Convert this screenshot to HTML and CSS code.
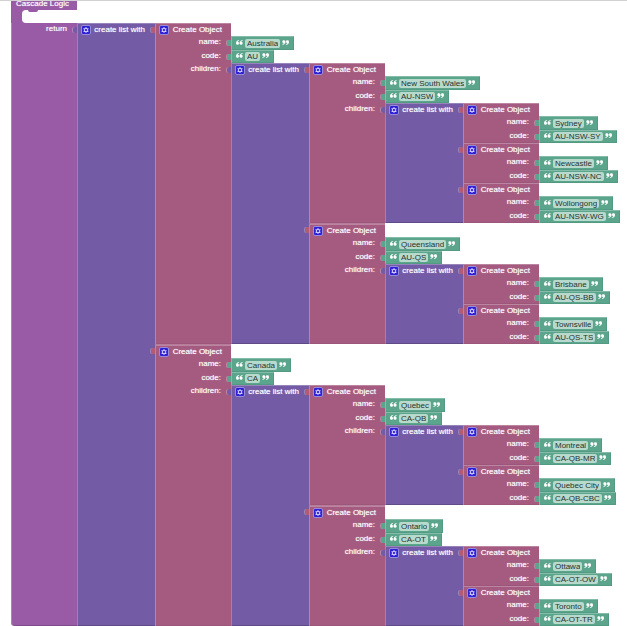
FILE: index.html
```html
<!DOCTYPE html>
<html lang="en">
<head>
<meta charset="utf-8">
<title>Cascade Logic</title>
<link rel="stylesheet" href="styles.css">
<script src="blocks.js" defer></script>
</head>
<body>
<svg class="symbols" aria-hidden="true">
  <symbol id="gear" viewBox="0 0 20 20">
    <rect x="1" y="1" width="18" height="18" rx="3" fill="#3020d4" stroke="#a79fe6" stroke-width="1.6"/>
    <path d="M10 4.5v11M5.2 7.2l9.6 5.6M14.8 7.2l-9.6 5.6" stroke="#d9d6ff" stroke-width="2.4"/>
    <circle cx="10" cy="10" r="3.2" fill="#3020d4" stroke="#d9d6ff" stroke-width="1.6"/>
  </symbol>
  <symbol id="open" viewBox="0 0 7 5">
    <path id="mark" d="M3 0C1 .5 0 1.6 0 3.3a1.5 1.5 0 1 0 1.6-1.5C1.7 1.2 2.2.8 3 .6z" fill="#fff" stroke="#fff" stroke-width=".2"/>
    <use href="#mark" x="3.6"/>
  </symbol>
  <symbol id="close" viewBox="0 0 7 5">
    <use href="#open" width="7" height="5" transform="rotate(180 3.5 2.5)"/>
  </symbol>
</svg>
<main class="workspace">
  <header class="root-head">Cascade Logic</header>
  <div class="slot-row"><div class="slot"></div></div>
  <section class="root-body">
    <div class="root-label">return</div>
    <div id="result"></div>
  </section>
</main>
</body>
</html>
```
FILE: styles.css
```css
:root {
  --root: #995ba5;
  --list: #745ba5;
  --object: #a55b80;
  --text: #5ba58c;
  --edge: rgba(255, 255, 255, 0.25);
}

* { box-sizing: border-box; }

body {
  margin: 0;
  background: #fff;
  color: #fff;
  font: 8px/12px "Liberation Sans", Arial, sans-serif;
}

.symbols { position: absolute; width: 0; height: 0; }

.workspace { padding-left: 11px; border-top: 1px solid #d4d0d6; }

.root-head {
  width: 66px;
  height: 9px;
  padding-left: 5px;
  line-height: 6px;
  background: var(--root);
  white-space: nowrap;
}

.root-head,
.root-label,
.head,
.key { text-shadow: 0 0 1px rgba(255, 255, 255, 0.7); }

.slot-row {
  width: 66px;
  height: 13px;
  padding-left: 11px;
  background: var(--root);
}

.slot {
  position: relative;
  height: 100%;
  border-radius: 4px 0 0 4px;
  background: #fff;
}

.slot::before {
  content: "";
  position: absolute;
  left: 6px;
  width: 10px;
  height: 2px;
  border-radius: 0 0 4px 4px;
  background: var(--root);
}

.root-body { display: flex; }

.root-label {
  width: 66px;
  padding-right: 10px;
  border-radius: 0 0 0 4px;
  background: var(--root);
  box-shadow: inset 1px 0 var(--edge), inset 0 -1px #7d4b88;
  text-align: right;
}

.list { position: relative; display: flex; }

.list-label {
  width: 78px;
  background: var(--list);
  box-shadow: inset 1px 1px var(--edge), inset 0 -1px #5f4b88;
}

.head {
  display: flex;
  align-items: center;
  justify-content: space-between;
  height: 13px;
  white-space: nowrap;
}

.list-label > .head { padding: 0 10px 0 4px; }

.object { position: relative; }

.object > .head {
  width: 76px;
  padding: 0 9px 0 4px;
  background: var(--object);
  box-shadow: inset 1px 1px var(--edge);
}

.object.parent + .object > .head {
  height: 14px;
  border-top: 1px solid #b77c99;
}

.gear {
  width: 10px;
  height: 10px;
  padding: 0;
  border: 0;
  background: none;
}

.gear svg { display: block; width: 10px; height: 10px; }

.row { display: flex; }

.key {
  width: 76px;
  padding-right: 10px;
  background: var(--object);
  box-shadow: inset 1px 0 var(--edge);
  text-align: right;
}

.row.name { height: 14px; }
.row.code { height: 13px; }

.row.children > .key,
.object:not(.parent) .row.code > .key {
  box-shadow: inset 1px 0 var(--edge), inset 0 -1px #9c5679;
}

.value {
  position: relative;
  display: flex;
  align-items: center;
  gap: 2px;
  padding: 0 5px;
  background: var(--text);
  box-shadow: inset 1px 1px var(--edge), inset -1px -1px #539a82;
}

.value svg { width: 7px; height: 5px; margin-bottom: 2px; }

.field {
  field-sizing: content;
  height: 9px;
  padding: 0 2px;
  border: 0;
  border-radius: 2px;
  background: #b8dacd;
  color: #26352f;
  font: inherit;
  line-height: 9px;
}

.value::before,
.list::before,
.object::before {
  content: "";
  position: absolute;
  top: 4px;
  left: -4px;
  width: 4px;
  height: 6px;
  border-radius: 2px 0 0 2px;
  background: var(--text);
  box-shadow: -1px 0 var(--edge);
}

.list::before { background: var(--list); }
.object::before { background: #b35b72; }
```
FILE: blocks.js
```js
const data = [
  { name: "Australia", code: "AU", children: [
    { name: "New South Wales", code: "AU-NSW", children: [
      { name: "Sydney", code: "AU-NSW-SY" },
      { name: "Newcastle", code: "AU-NSW-NC" },
      { name: "Wollongong", code: "AU-NSW-WG" }
    ] },
    { name: "Queensland", code: "AU-QS", children: [
      { name: "Brisbane", code: "AU-QS-BB" },
      { name: "Townsville", code: "AU-QS-TS" }
    ] }
  ] },
  { name: "Canada", code: "CA", children: [
    { name: "Quebec", code: "CA-QB", children: [
      { name: "Montreal", code: "CA-QB-MR" },
      { name: "Quebec City", code: "CA-QB-CBC" }
    ] },
    { name: "Ontario", code: "CA-OT", children: [
      { name: "Ottawa", code: "CA-OT-OW" },
      { name: "Toronto", code: "CA-OT-TR" }
    ] }
  ] }
];

const head = (title) => `
  <div class="head">
    <button class="gear" type="button" aria-label="Edit block"><svg><use href="#gear"/></svg></button>
    <span>${title}</span>
  </div>`;

const row = (key, text) => `
  <label class="row ${key}">
    <span class="key">${key}:</span>
    <span class="value">
      <svg><use href="#open"/></svg>
      <input class="field" type="text" value="${text}">
      <svg><use href="#close"/></svg>
    </span>
  </label>`;

const object = (item) => `
  <div class="object ${item.children ? "parent" : ""}">
    ${head("Create Object")}
    ${row("name", item.name)}
    ${row("code", item.code)}
    ${item.children ? `<div class="row children"><span class="key">children:</span>${list(item.children)}</div>` : ""}
  </div>`;

const list = (items) => `
  <div class="list">
    <div class="list-label">${head("create list with")}</div>
    <div>${items.map(object).join("")}</div>
  </div>`;

document.getElementById("result").innerHTML = list(data);
```
